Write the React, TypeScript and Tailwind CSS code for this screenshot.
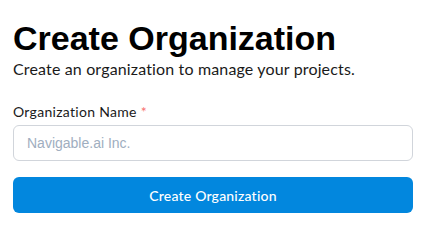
import React from "react";

export default function App() {
  return (
    <div className="w-[423px] h-[240px] bg-white pl-[13px] pr-[10px] pt-[18px] font-['Lato','Noto_Sans',sans-serif]">
      <h1 className="font-['Liberation_Sans',Arial,sans-serif] font-bold text-[34px] leading-[40px] text-black">
        Create Organization
      </h1>
      <p className="text-[16px] leading-[20px] tracking-[0.15px] text-[#1a1a1a] mt-[1px]">
        Create an organization to manage your projects.
      </p>
      <div className="mt-[24px]">
        <label className="block text-[14px] leading-[18px] tracking-[0.3px] text-[#1a1a1a]">
          Organization Name <span className="text-[#f87171]">*</span>
        </label>
        <input
          className="mt-[4px] w-full h-[36px] rounded-[6px] border border-[#d1d5db] px-[13px] font-['Liberation_Sans',Arial,sans-serif] text-[14px] placeholder:text-[#a0aec0] outline-none"
          placeholder="Navigable.ai Inc."
        />
      </div>
      <button className="mt-[16px] w-full h-[36px] rounded-[6px] bg-[#0287de] text-white text-[14px] tracking-[0.2px] font-medium">
        Create Organization
      </button>
    </div>
  );
}
